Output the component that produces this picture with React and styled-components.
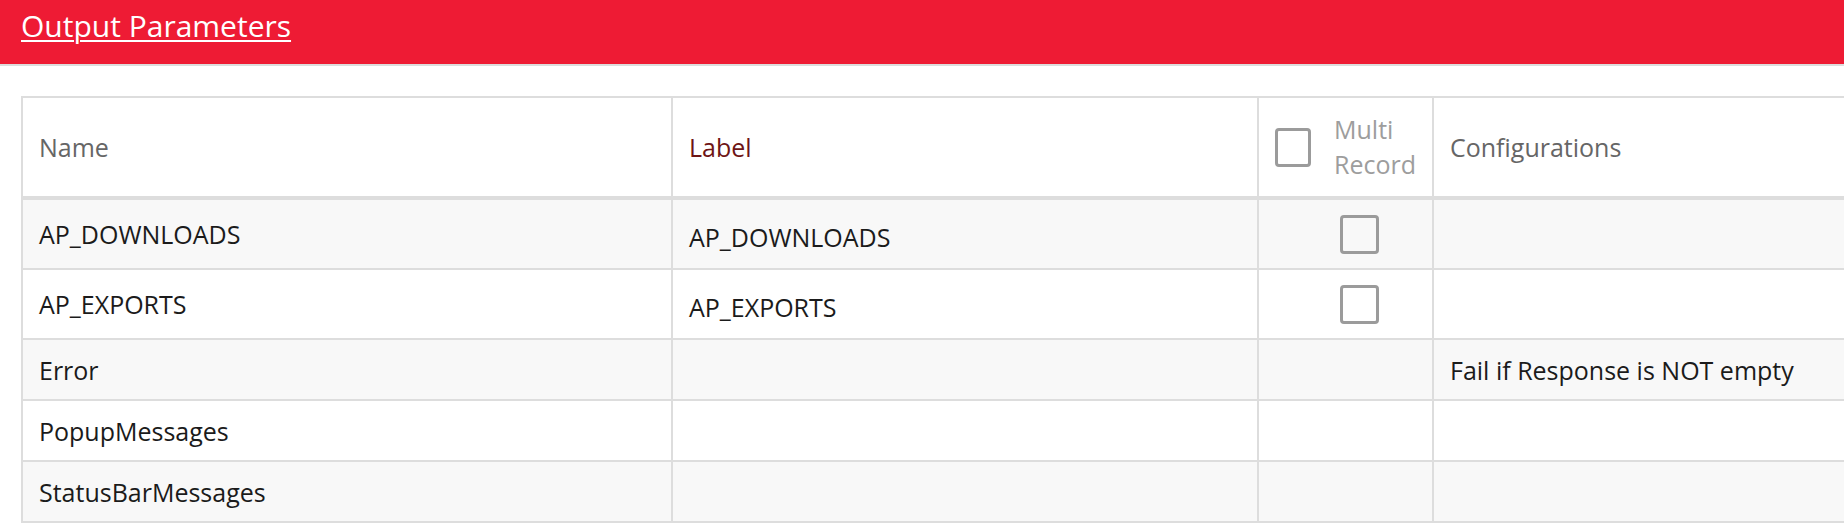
import React from "react";
import styled, { createGlobalStyle } from "styled-components";

const GlobalStyle = createGlobalStyle`
  *, *::before, *::after { box-sizing: border-box; }
  html, body { margin: 0; padding: 0; overflow: hidden; background: #ffffff; }
  body { font-family: "Open Sans", "Noto Sans", sans-serif; color: #1b1b1b; }
`;

const Page = styled.div`
  width: 100%;
`;

const TitleBar = styled.header`
  height: 66px;
  background: #ee1b34;
  border-bottom: 2px solid #dcdcdc;
  padding: 5px 0 0 21px;
`;

const Title = styled.a`
  font-size: 30px;
  line-height: normal;
  color: #ffffff;
  text-decoration: underline;
  text-decoration-thickness: 2px;
  text-underline-offset: 3px;
  cursor: pointer;
`;

const Content = styled.main`
  padding: 30px 0 0 21px;
`;

const Grid = styled.table`
  border-collapse: separate;
  border-spacing: 0;
  table-layout: fixed;
  width: 1913px;
  border-top: 2px solid #dddddd;
  border-left: 2px solid #dddddd;
`;

const HeadCell = styled.th`
  height: 102px;
  padding: 0 16px;
  text-align: left;
  vertical-align: middle;
  border-right: 2px solid #dddddd;
  border-bottom: 4px solid #dddddd;
  font-size: 25px;
  font-weight: 500;
  color: ${(p) => p.$color || "#666666"};
  background: #ffffff;
`;

const MultiHead = styled.div`
  display: flex;
  align-items: center;
  gap: 23px;
`;

const MultiText = styled.span`
  color: #9d9d9d;
  line-height: 35px;
`;

const Row = styled.tr`
  background: ${(p) => (p.$striped ? "#f8f8f8" : "#ffffff")};
`;

const Cell = styled.td`
  height: ${(p) => (p.$tall ? "70px" : "61px")};
  padding: ${(p) => (p.$nudge ? "5px 16px 0" : "0 16px")};
  vertical-align: middle;
  border-right: 2px solid #dddddd;
  border-bottom: 2px solid #dddddd;
  font-size: 25px;
  line-height: 34px;
  color: #1b1b1b;
  white-space: nowrap;
`;

const CheckCell = styled(Cell)`
  padding: 0 0 0 28px;
  text-align: center;
`;

const Box = styled.span`
  display: inline-block;
  width: 39px;
  height: 39px;
  border: 3px solid #9b9b9b;
  border-radius: 4px;
  vertical-align: middle;
  background: transparent;
`;

const rows = [
  { name: "AP_DOWNLOADS", label: "AP_DOWNLOADS", multi: true, config: "" },
  { name: "AP_EXPORTS", label: "AP_EXPORTS", multi: true, config: "" },
  { name: "Error", label: "", multi: false, config: "Fail if Response is NOT empty" },
  { name: "PopupMessages", label: "", multi: false, config: "" },
  { name: "StatusBarMessages", label: "", multi: false, config: "" },
];

export default function App() {
  return (
    <Page>
      <GlobalStyle />
      <TitleBar>
        <Title>Output Parameters</Title>
      </TitleBar>
      <Content>
        <Grid>
          <colgroup>
            <col style={{ width: 650 }} />
            <col style={{ width: 586 }} />
            <col style={{ width: 175 }} />
            <col style={{ width: 500 }} />
          </colgroup>
          <thead>
            <tr>
              <HeadCell>Name</HeadCell>
              <HeadCell $color="#6e1515">Label</HeadCell>
              <HeadCell>
                <MultiHead>
                  <Box />
                  <MultiText>
                    Multi
                    <br />
                    Record
                  </MultiText>
                </MultiHead>
              </HeadCell>
              <HeadCell>Configurations</HeadCell>
            </tr>
          </thead>
          <tbody>
            {rows.map((r, i) => (
              <Row key={r.name} $striped={i % 2 === 0}>
                <Cell $tall={r.multi}>{r.name}</Cell>
                <Cell $tall={r.multi} $nudge={!!r.label}>
                  {r.label}
                </Cell>
                <CheckCell $tall={r.multi}>{r.multi && <Box />}</CheckCell>
                <Cell $tall={r.multi}>{r.config}</Cell>
              </Row>
            ))}
          </tbody>
        </Grid>
      </Content>
    </Page>
  );
}
